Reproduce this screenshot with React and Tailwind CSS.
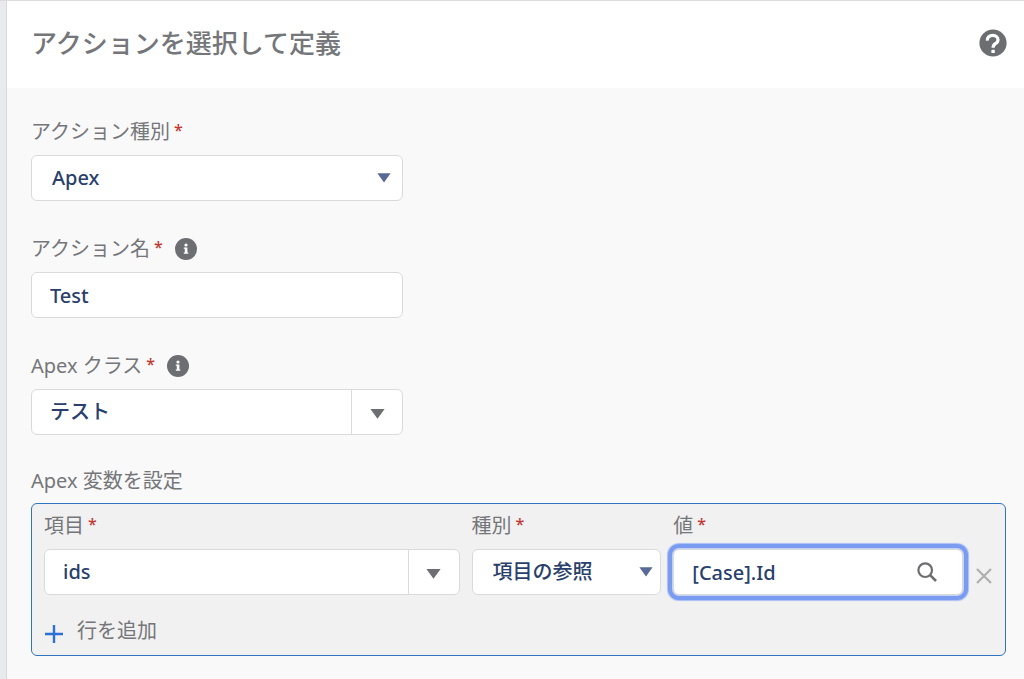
import { useState } from 'react';

const controlClass =
  'w-full min-w-0 h-[46px] bg-white border border-[#d9dadc] rounded-md text-xl font-medium text-[#2a3f6b] focus:outline-none';

const Caret = ({ className }) => (
  <svg viewBox="0 0 15 10" className={className} fill="currentColor" aria-hidden="true">
    <path d="M0.4 0H14.6L7.5 9.8Z" />
  </svg>
);

const InfoIcon = () => (
  <svg viewBox="0 0 22 22" className="w-[22px] h-[22px] text-[#6c6e72]" aria-hidden="true">
    <circle cx="11" cy="11" r="11" fill="currentColor" />
    <circle cx="11" cy="7" r="1.6" fill="#fff" />
    <path d="M8.8 9.4H12.4V14.4H13.3V15.8H8.8V14.4H9.8V10.8H8.8Z" fill="#fff" />
  </svg>
);

const HelpIcon = () => (
  <svg viewBox="0 0 28 28" className="w-7 h-7 text-[#6c6e72]" aria-hidden="true">
    <circle cx="14" cy="14" r="13.6" fill="currentColor" />
    <path
      d="M8.4 11.6C8 8.2 10.6 6.4 13.8 6.4C17 6.4 19 8.2 19 10.7C19 12.8 17.8 13.8 16.4 14.7C15 15.6 14.1 16.2 14.1 18.8"
      fill="none"
      stroke="#fff"
      strokeWidth="3.2"
    />
    <rect x="12.4" y="20.8" width="3.4" height="3.2" rx="0.6" fill="#fff" />
  </svg>
);

const SearchIcon = () => (
  <svg viewBox="0 0 20 20" className="w-5 h-5" fill="none" stroke="currentColor" strokeWidth="2.2" aria-hidden="true">
    <circle cx="8.2" cy="8.2" r="6.8" />
    <path d="M12.9 12.9L19 19" strokeWidth="2.6" />
  </svg>
);

const FieldLabel = ({ htmlFor, info, children }) => (
  <div className="flex items-center h-[31px]">
    <label htmlFor={htmlFor} className="flex items-start gap-1 text-xl leading-7 text-[#757679]">
      {children}
      <span className="text-[#c23934] text-base leading-6 font-medium">*</span>
    </label>
    {info && (
      <button type="button" aria-label="Info" className="ml-3">
        <InfoIcon />
      </button>
    )}
  </div>
);

const SelectBox = ({ id, options, compact }) => (
  <div className="relative">
    <select id={id} className={`${controlClass} appearance-none pl-5 pr-8`}>
      {options.map((option) => (
        <option key={option}>{option}</option>
      ))}
    </select>
    <Caret
      className={`absolute top-1/2 -translate-y-1/2 w-[14px] h-[10px] text-[#596a97] pointer-events-none ${
        compact ? 'right-2' : 'right-3'
      }`}
    />
  </div>
);

const ComboBox = ({ id, value, onChange }) => (
  <div className="flex h-[46px] bg-white border border-[#d9dadc] rounded-md">
    <input
      id={id}
      type="text"
      value={value}
      onChange={(e) => onChange(e.target.value)}
      className="flex-1 min-w-0 px-[18px] rounded-l-md text-xl font-medium text-[#2a3f6b] focus:outline-none"
    />
    <button
      type="button"
      aria-label="Open list"
      className="flex items-center justify-center w-[51px] pt-1 border-l border-[#d9dadc] text-[#6c6e72]"
    >
      <Caret className="w-[15px] h-[10px]" />
    </button>
  </div>
);

const App = () => {
  const [name, setName] = useState('Test');
  const [apexClass, setApexClass] = useState('テスト');
  const [row, setRow] = useState({ field: 'ids', value: '[Case].Id' });

  return (
    <div className="min-h-screen flex bg-[#f9f9f9] border-t border-[#dcdcdc] font-['Noto_Sans','Noto_Sans_CJK_JP',sans-serif]">
      <div className="w-[7px] shrink-0 bg-[#e9eaec] border-r border-[#d8d9dc]" />

      <main className="flex-1 min-w-0">
        {/* Header */}
        <header className="flex items-center justify-between h-[87px] pl-6 pr-[17px] pb-1 bg-white">
          <h1 className="text-[26px] leading-9 font-medium text-[#757679]">アクションを選択して定義</h1>
          <button type="button" aria-label="Help">
            <HelpIcon />
          </button>
        </header>

        <form className="pl-6 pr-[18px] pt-7 pb-6" onSubmit={(e) => e.preventDefault()}>
          <div className="flex flex-col gap-8 max-w-[372px]">
            <div className="flex flex-col gap-2">
              <FieldLabel htmlFor="action-type">アクション種別</FieldLabel>
              <SelectBox id="action-type" options={['Apex']} />
            </div>

            <div className="flex flex-col gap-2">
              <FieldLabel htmlFor="action-name" info>アクション名</FieldLabel>
              <input
                id="action-name"
                type="text"
                value={name}
                onChange={(e) => setName(e.target.value)}
                className={`${controlClass} px-[18px]`}
              />
            </div>

            <div className="flex flex-col gap-2">
              <FieldLabel htmlFor="apex-class" info>Apex クラス</FieldLabel>
              <ComboBox id="apex-class" value={apexClass} onChange={setApexClass} />
            </div>
          </div>

          {/* Apex variables */}
          <h2 className="mt-8 mb-2 text-xl leading-7 text-[#757679]">Apex 変数を設定</h2>
          <section className="px-3 pt-1.5 pb-2 bg-[#f1f1f1] border border-[#2f74c0] rounded-md">
            <div className="grid grid-cols-[416fr_190fr_290fr_auto] gap-x-3">
              <div className="flex flex-col gap-2 min-w-0">
                <FieldLabel htmlFor="var-field">項目</FieldLabel>
                <ComboBox
                  id="var-field"
                  value={row.field}
                  onChange={(field) => setRow({ ...row, field })}
                />
              </div>

              <div className="flex flex-col gap-2 min-w-0">
                <FieldLabel htmlFor="var-type">種別</FieldLabel>
                <SelectBox id="var-type" options={['項目の参照']} compact />
              </div>

              <div className="flex flex-col gap-2 min-w-0">
                <FieldLabel htmlFor="var-value">値</FieldLabel>
                <div className="relative">
                  <input
                    id="var-value"
                    type="text"
                    value={row.value}
                    onChange={(e) => setRow({ ...row, value: e.target.value })}
                    className={`${controlClass} pl-[18px] pr-14 shadow-[0_0_0_1px_#c5d2f5,0_0_0_5px_#7a9cf0,0_0_1px_6px_#a9bff4]`}
                  />
                  <button
                    type="button"
                    aria-label="Search"
                    className="absolute right-[26px] top-1/2 -translate-y-1/2 text-[#6c6e72]"
                  >
                    <SearchIcon />
                  </button>
                </div>
              </div>

              <button type="button" aria-label="Remove row" className="self-end mb-2.5 text-[#aeafb1]">
                <svg viewBox="0 0 18 18" className="w-[18px] h-[18px]" stroke="currentColor" strokeWidth="2.2" aria-hidden="true">
                  <path d="M2 2L16 16M16 2L2 16" />
                </svg>
              </button>
            </div>

            <button type="button" className="flex items-center gap-3.5 mt-[22px] mb-0.5 text-xl leading-7 text-[#757679]">
              <svg viewBox="0 0 18 18" className="w-[18px] h-[18px] mt-1.5 ml-px text-[#2f6fd8]" stroke="currentColor" strokeWidth="2.4" aria-hidden="true">
                <path d="M9 0V18M0 9H18" />
              </svg>
              行を追加
            </button>
          </section>
        </form>
      </main>
    </div>
  );
};

export default App;
